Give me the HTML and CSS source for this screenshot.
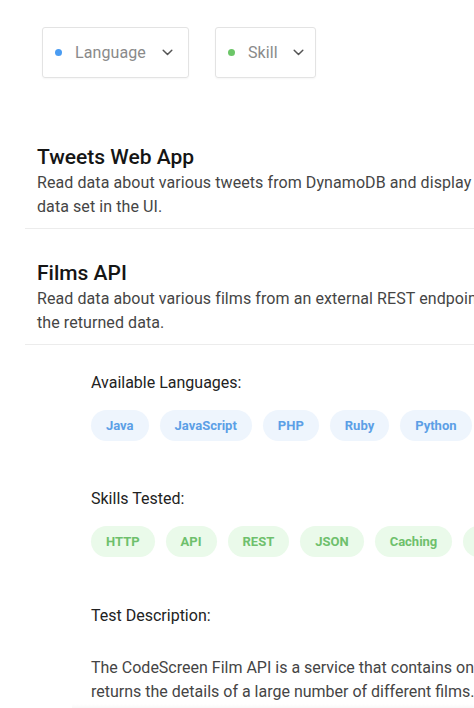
FILE: index.html
```html
<!DOCTYPE html>
<html>
<head>
<meta charset="utf-8">
<link rel="stylesheet" href="styles.css">
</head>
<body>
<div class="page">
  <div class="filters">
    <div class="dropdown lang">
      <span class="dot blue"></span>
      <span class="label">Language</span>
      <svg class="chev" width="11" height="7" viewBox="0 0 11 7"><path d="M1.2 1.2 L5.5 5.5 L9.8 1.2" fill="none" stroke="#555" stroke-width="1.5" stroke-linecap="round" stroke-linejoin="round"/></svg>
    </div>
    <div class="dropdown skill">
      <span class="dot green"></span>
      <span class="label">Skill</span>
      <svg class="chev" width="11" height="7" viewBox="0 0 11 7"><path d="M1.2 1.2 L5.5 5.5 L9.8 1.2" fill="none" stroke="#555" stroke-width="1.5" stroke-linecap="round" stroke-linejoin="round"/></svg>
    </div>
  </div>

  <div class="project first">
    <h2 class="title">Tweets Web App</h2>
    <p class="desc"><span class="line">Read data about various tweets from DynamoDB and display the</span><span class="line">data set in the UI.</span></p>
  </div>

  <div class="project second">
    <h2 class="title">Films API</h2>
    <p class="desc"><span class="line">Read data about various films from an external REST endpoint and display</span><span class="line">the returned data.</span></p>
  </div>

  <div class="details">
    <div class="section-label">Available Languages:</div>
    <div class="chips">
      <span class="chip lang-chip">Java</span>
      <span class="chip lang-chip">JavaScript</span>
      <span class="chip lang-chip">PHP</span>
      <span class="chip lang-chip">Ruby</span>
      <span class="chip lang-chip">Python</span>
      <span class="chip lang-chip">Go</span>
    </div>
    <div class="section-label skills">Skills Tested:</div>
    <div class="chips">
      <span class="chip skill-chip">HTTP</span>
      <span class="chip skill-chip">API</span>
      <span class="chip skill-chip">REST</span>
      <span class="chip skill-chip">JSON</span>
      <span class="chip skill-chip">Caching</span>
      <span class="chip skill-chip">Testing</span>
    </div>
    <div class="section-label test">Test Description:</div>
    <p class="para"><span class="line">The CodeScreen Film API is a service that contains one endpoint which</span><span class="line">returns the details of a large number of different films.</span></p>
  </div>
  <div class="footer-shade"></div>
</div>
</body>
</html>
```
FILE: styles.css
```css
html, body {
  margin: 0;
  padding: 0;
  background: #fff;
  overflow: hidden;
}
body {
  width: 474px;
  height: 708px;
  font-family: Roboto, "Liberation Sans", sans-serif;
}
.page {
  width: 640px;
}
.filters {
  display: flex;
  gap: 26px;
  padding: 27px 0 0 42px;
}
.dropdown {
  box-sizing: border-box;
  height: 51px;
  border: 1px solid #e3e3e3;
  border-radius: 3px;
  display: flex;
  align-items: center;
  padding-left: 12px;
  box-shadow: 0 1px 2px rgba(0,0,0,0.04);
}
.dropdown.lang { width: 147px; }
.dropdown.skill { width: 101px; }
.dot {
  width: 7px;
  height: 7px;
  border-radius: 50%;
  display: inline-block;
}
.dot.blue { background: #4a9cf2; }
.dot.green { background: #6cc668; }
.label {
  margin-left: 13px;
  font-size: 16px;
  color: #8a8a8a;
  letter-spacing: 0.1px;
}
.chev { margin-left: 16px; }
.skill .chev { margin-left: 15px; }

.project {
  padding-left: 37px;
}
.project .title {
  margin: 0;
  font-size: 21px;
  font-weight: 500;
  line-height: 28px;
  color: #151515;
}
.project .desc {
  margin: 0 0 0 -12px;
  padding: 0 0 9px 12px;
  font-size: 16px;
  line-height: 24px;
  color: #454545;
  letter-spacing: 0.08px;
  border-bottom: 1px solid #ececec;
}
.project.first { margin-top: 65px; }
.project.second { margin-top: 30px; }
.line {
  display: block;
  white-space: nowrap;
}
.details {
  padding-left: 91px;
  padding-top: 27px;
}
.section-label {
  font-size: 16px;
  line-height: 22px;
  color: #222;
}
.section-label.skills { margin-top: 47px; }
.section-label.test { margin-top: 48px; }
.chips {
  display: flex;
  gap: 11px;
  margin-top: 16px;
  white-space: nowrap;
}
.chip {
  height: 31px;
  line-height: 31px;
  padding: 0 15px;
  border-radius: 16px;
  font-size: 13px;
  font-weight: 700;
}
.lang-chip {
  background: #eef5fd;
  color: #5c9fe6;
}
.skill-chip {
  background: #eafaea;
  color: #6ec06c;
}
.para {
  margin: 29px 0 0 0;
  font-size: 16px;
  line-height: 24px;
  color: #454545;
}
.footer-shade {
  margin-left: 72px;
  height: 8px;
  background: linear-gradient(#fff, #f2f2f2);
}
```
